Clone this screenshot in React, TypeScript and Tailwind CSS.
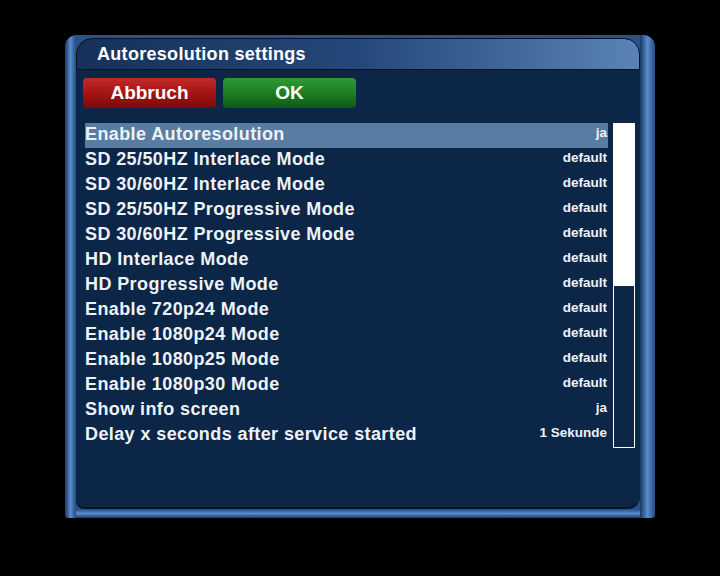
const rows = [
  { label: 'Enable Autoresolution', value: 'ja' },
  { label: 'SD 25/50HZ Interlace Mode', value: 'default' },
  { label: 'SD 30/60HZ Interlace Mode', value: 'default' },
  { label: 'SD 25/50HZ Progressive Mode', value: 'default' },
  { label: 'SD 30/60HZ Progressive Mode', value: 'default' },
  { label: 'HD Interlace Mode', value: 'default' },
  { label: 'HD Progressive Mode', value: 'default' },
  { label: 'Enable 720p24 Mode', value: 'default' },
  { label: 'Enable 1080p24 Mode', value: 'default' },
  { label: 'Enable 1080p25 Mode', value: 'default' },
  { label: 'Enable 1080p30 Mode', value: 'default' },
  { label: 'Show info screen', value: 'ja' },
  { label: 'Delay x seconds after service started', value: '1 Sekunde' },
]

export default function App() {
  const selected = 0

  return (
    <div className="w-[720px] h-[576px] bg-black pt-[35px] pl-[65px] font-['Liberation_Sans',Arial,sans-serif]">
      <div className="w-[590px] h-[483px] flex rounded-t-[12px] rounded-b-[4px] overflow-hidden bg-[#2a5289]">
        {/* left frame bar */}
        <div className="w-[11px] bg-gradient-to-r from-[#1a3a68] via-[#5b8dcc] to-[#244b82]" />

        <div className="flex-1 flex flex-col pt-[3px]">
          {/* title bar */}
          <div className="h-[32px] rounded-t-[16px] border border-[#061428] bg-gradient-to-r from-[#15315a] via-[#25487a] to-[#5a84b6] flex items-center pl-[20px]">
            <span className="text-white font-bold text-[18px] tracking-[0.3px]">Autoresolution settings</span>
          </div>

          {/* content panel */}
          <div className="flex-1 bg-[#0b2647] rounded-br-[12px] rounded-bl-[8px] border-b-2 border-[#061428] pt-[8px] pl-[7px]">
            <div className="flex gap-[7px]">
              <div className="w-[133px] h-[30px] rounded-[4px] bg-gradient-to-b from-[#c42a2a] via-[#a51414] to-[#7a0a0a] flex items-center justify-center">
                <span className="text-white font-bold text-[19px]">Abbruch</span>
              </div>
              <div className="w-[133px] h-[30px] rounded-[4px] bg-gradient-to-b from-[#2f9a35] via-[#1d7f22] to-[#0f5a14] flex items-center justify-center">
                <span className="text-white font-bold text-[19px]">OK</span>
              </div>
            </div>

            <div className="flex mt-[15px] ml-[2px] gap-[5px]">
              <div className="w-[523px] flex flex-col">
                {rows.map((row, i) => (
                  <div
                    key={row.label}
                    className={
                      'h-[25px] flex items-center justify-between ' +
                      (i === selected ? 'bg-[#587ca2]' : '')
                    }
                  >
                    <span className="text-[#eef2f7] font-bold text-[18px] tracking-[0.4px] leading-none -mt-[3px]">{row.label}</span>
                    <span className="text-[#eef2f7] font-bold text-[13.5px] leading-none -mt-[6px] pr-[1px]">{row.value}</span>
                  </div>
                ))}
              </div>
              <div className="w-[22px] h-[325px] border border-white flex flex-col">
                <div className="h-[162px] bg-white" />
              </div>
            </div>
          </div>

          {/* bottom frame bar */}
          <div className="h-[9px] bg-gradient-to-b from-[#244b82] via-[#5b8dcc] to-[#1a3a68]" />
        </div>

        {/* right frame bar */}
        <div className="w-[15px] bg-gradient-to-r from-[#1a3a68] via-[#5b8dcc] to-[#244b82]" />
      </div>
    </div>
  )
}
